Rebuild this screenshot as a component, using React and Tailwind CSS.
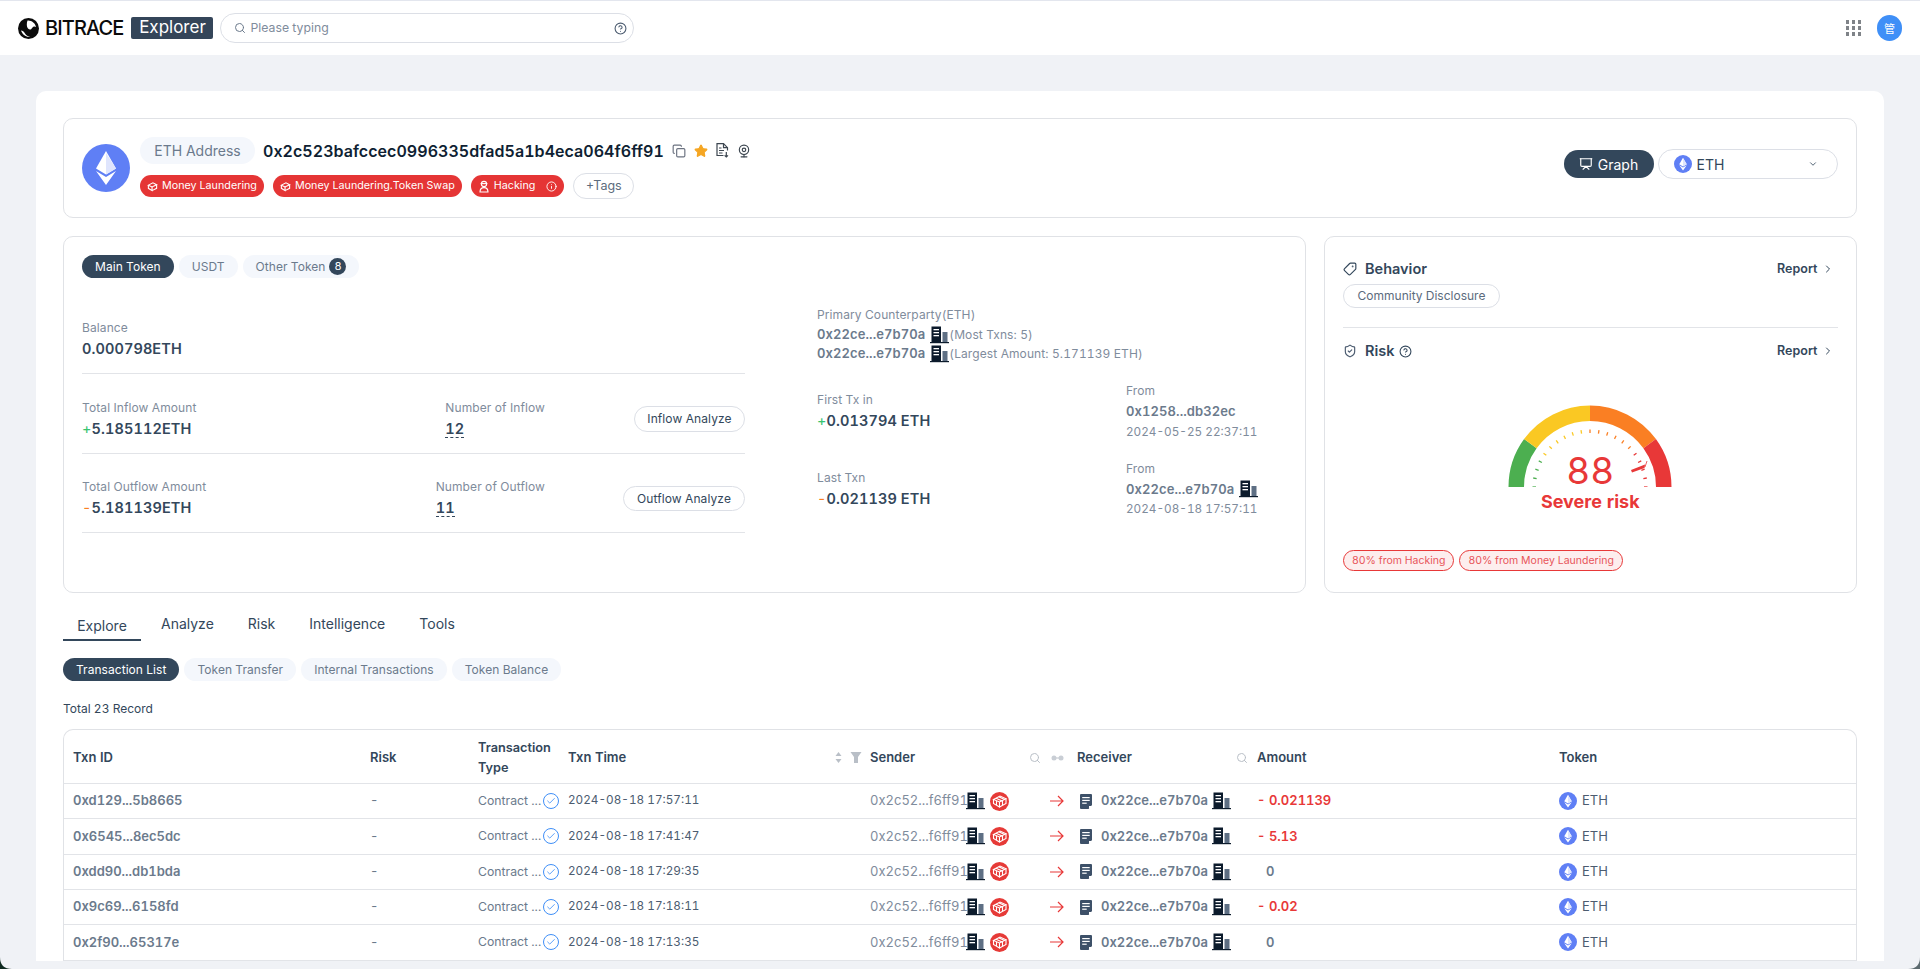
import { Copy, Star, Search, ChevronRight, ChevronDown, Tag, CircleHelp, Info, ShieldCheck, Presentation, Check, Webcam } from 'lucide-react'

const rows = [
  { id: '0xd129...5b8665', time: '2024-08-18 17:57:11', amount: '- 0.021139' },
  { id: '0x6545...8ec5dc', time: '2024-08-18 17:41:47', amount: '- 5.13' },
  { id: '0xdd90...db1bda', time: '2024-08-18 17:29:35', amount: '0' },
  { id: '0x9c69...6158fd', time: '2024-08-18 17:18:11', amount: '- 0.02' },
  { id: '0x2f90...65317e', time: '2024-08-18 17:13:35', amount: '0' },
]

const TABLE_COLS = 'grid grid-cols-[297px_108px_90px_302px_207px_180px_302px_1fr] pl-[9px]'

function EthIcon({ size = 18 }) {
  return (
    <svg width={size} height={size} viewBox="0 0 48 48" className="shrink-0">
      <circle cx="24" cy="24" r="24" fill="#5f7ff5" />
      <path d="M24 7 L34 24.5 L24 30.5 L14 24.5 Z" fill="#fff" />
      <path d="M24 9 L24 30.5 L34 24.5 Z" fill="#dfe5fd" />
      <path d="M14 27 L24 33 L34 27 L24 41 Z" fill="#fff" />
    </svg>
  )
}

function BuildingIcon({ className = '' }) {
  return (
    <svg width="19" height="18" viewBox="0 0 19 18" className={`shrink-0 ${className}`}>
      <rect x="1.5" y="0.5" width="9.5" height="15.5" fill="#0c1b2c" />
      <rect x="3.5" y="3" width="5.5" height="1.3" fill="#fff" />
      <rect x="3.5" y="6" width="5.5" height="1.3" fill="#fff" />
      <rect x="3.5" y="9" width="5.5" height="1.3" fill="#fff" />
      <rect x="12.5" y="6" width="5" height="10" fill="#5e6f84" />
      <rect x="0" y="16" width="19" height="1.2" fill="#0c1b2c" />
    </svg>
  )
}

function CubeBadge() {
  return (
    <svg width="19" height="19" viewBox="0 0 19 19" className="shrink-0">
      <circle cx="9.5" cy="9.5" r="9.5" fill="#e63a37" />
      <g fill="none" stroke="#fff" strokeWidth="1.1">
        <path d="M3.5 7.5 L10 4 L16 6.8 L9.5 10 Z" />
        <path d="M3.5 7.5 V11.5 L9.5 15 V10" />
        <path d="M16 6.8 V11.5 L9.5 15" />
        <path d="M6 6.2 L12.2 9 M8.6 4.8 L14.6 7.6 M12.5 9 V13 M6.5 9 V13" />
      </g>
    </svg>
  )
}

function DocIcon() {
  return (
    <svg width="12" height="15" viewBox="0 0 12 15" className="shrink-0">
      <path d="M1 0 H11 Q12 0 12 1 V11 L8.5 15 H1 Q0 15 0 14 V1 Q0 0 1 0 Z" fill="#3d5068" />
      <rect x="2.2" y="3" width="7.5" height="1.2" fill="#fff" />
      <rect x="2.2" y="5.8" width="7.5" height="1.2" fill="#fff" />
      <rect x="2.2" y="8.6" width="4.5" height="1.2" fill="#fff" />
      <path d="M9 12 H12 L9 15 Z" fill="#fff" />
    </svg>
  )
}

function ReportDownIcon() {
  return (
    <svg width="13" height="15" viewBox="0 0 13 15" className="shrink-0" fill="none" stroke="#3c4650" strokeWidth="1.2">
      <path d="M7.5 12.5 H1 V0.7 H7.5 L11.5 4.7 V7.5" />
      <path d="M7.5 0.7 V4.7 H11.5" />
      <path d="M3 5 H5.5 M3 7.5 H8 M3 10 H6.5" />
      <path d="M10.3 9 V14 M8.6 12.4 L10.3 14 L12 12.4" />
    </svg>
  )
}

function MoneyGlyph() {
  return (
    <svg width="11" height="11" viewBox="0 0 12 12" className="shrink-0">
      <g fill="none" stroke="#fff" strokeWidth="1.2">
        <path d="M1.5 4.5 L6.5 2 L10.5 4 L5.5 6.5 Z" />
        <path d="M1.5 4.5 V8 L5.5 10.5 V6.5 M10.5 4 V8 L5.5 10.5" />
      </g>
    </svg>
  )
}

function HackerGlyph() {
  return (
    <svg width="12" height="13" viewBox="0 0 12 13" className="shrink-0">
      <g fill="none" stroke="#fff" strokeWidth="1.1">
        <circle cx="6" cy="4" r="2.6" />
        <path d="M2 12 Q2 7.6 6 7.6 Q10 7.6 10 12 Z" />
        <path d="M2.6 3.6 H9.4" />
      </g>
    </svg>
  )
}

function Logo() {
  return (
    <svg width="21" height="21" viewBox="0 0 21 21" className="shrink-0">
      <circle cx="10.5" cy="10.5" r="10.5" fill="#0b0b0b" />
      <path d="M9.5 2.5 C13 2 17.5 5 18 9 C16.5 8 15 8.5 14 10 C13 12 11.5 12 10 10.5 C8.5 9 8.5 5 9.5 2.5 Z" fill="#fff" />
      <path d="M3 12.5 C4.5 12.5 6 13.5 7 15.5 C8 17.5 10 18.5 12 18.5 C9 19.8 4.5 17 3 12.5 Z" fill="#fff" />
    </svg>
  )
}

function Pill({ active, children }) {
  return (
    <span className={`flex h-[23px] items-center gap-1 rounded-full px-[13px] text-[12px] tracking-[0.05px] ${active ? 'bg-[#33475b] text-white' : 'bg-[#f4f7fc] text-[#6b7a8c]'}`}>
      {children}
    </span>
  )
}

function RedTag({ icon, children }) {
  return (
    <span className="flex h-[22px] items-center gap-[4px] rounded-full bg-[#e53535] px-[7px] text-[10.75px] text-white">
      {icon}
      {children}
    </span>
  )
}

function AddressBold({ children }) {
  return <span className="text-[13px] font-semibold text-[#6b7a8c]">{children}</span>
}

function polar(r, deg) {
  const a = (deg * Math.PI) / 180
  return [85 - r * Math.cos(a), 82 - r * Math.sin(a)]
}

function arc(from, to) {
  const [x1, y1] = polar(81.5, from)
  const [x2, y2] = polar(81.5, to)
  const [x3, y3] = polar(66, to)
  const [x4, y4] = polar(66, from)
  return `M${x1} ${y1} A81.5 81.5 0 0 1 ${x2} ${y2} L${x3} ${y3} A66 66 0 0 0 ${x4} ${y4} Z`
}

function tickColor(deg) {
  if (deg < 36) return '#4caf50'
  if (deg < 90) return '#fac823'
  if (deg < 144) return '#fa7f23'
  return '#e83838'
}

function Gauge() {
  const ticks = Array.from({ length: 21 }, (_, i) => i * 9)
  return (
    <div className="relative mx-auto h-[82px] w-[170px]">
      <svg width="170" height="82" viewBox="0 0 170 82">
        <path d={arc(0, 36)} fill="#4caf50" />
        <path d={arc(36, 90)} fill="#fac823" />
        <path d={arc(90, 144)} fill="#fa7f23" />
        <path d={arc(144, 180)} fill="#e83838" />
        {ticks.map((deg) => {
          const [x1, y1] = polar(54, deg)
          const [x2, y2] = polar(57.5, deg)
          return <line key={deg} x1={x1} y1={y1} x2={x2} y2={y2} stroke={tickColor(deg)} strokeWidth="1.3" />
        })}
        <path d="M126 65 L140 59.5 L139.6 63 L127 67.5 Z" fill="#e83838" />
        <path d="M140 62 L142 56" stroke="#e83838" strokeWidth="0.8" />
      </svg>
      <span className="absolute inset-x-0 top-[50px] text-center text-[37px] leading-[32px] text-[#e83838]">88</span>
    </div>
  )
}

function WindowCorner({ side, color }) {
  return (
    <svg width="12" height="12" viewBox="0 0 12 12" className={`absolute bottom-0 ${side === 'left' ? 'left-0' : 'right-0 -scale-x-100'}`}>
      <path d="M0 0 Q0 12 12 12 H0 Z" fill={color} />
    </svg>
  )
}

function TxnRow({ row }) {
  const isOut = row.amount !== '0'
  return (
    <div className={`${TABLE_COLS} h-[35.33px] items-center border-b border-[#e2e4e8] text-[13px] text-[#6b7a8c]`}>
      <span className="font-semibold">{row.id}</span>
      <span>-</span>
      <span className="flex items-center text-[12.25px]">
        <span className="w-[65px]">Contract ...</span>
        <span className="flex h-4 w-4 shrink-0 items-center justify-center rounded-full border border-[#3f8ff7] text-[#3f8ff7]">
          <Check size={10} />
        </span>
      </span>
      <span className="whitespace-nowrap text-[11.75px] text-[#4c5c70]">{row.time}</span>
      <span className="flex items-center">
        <span className="w-[96px] text-[#7f8c9c]">0x2c52...f6ff91</span>
        <BuildingIcon />
        <span className="ml-[5px]"><CubeBadge /></span>
      </span>
      <span className="flex items-center">
        <svg width="14" height="12" viewBox="0 0 14 12" className="-ml-[27px] mr-[16px] shrink-0" fill="none" stroke="#e83838" strokeWidth="1.2">
          <path d="M0 6 H13 M8 1 L13 6 L8 11" />
        </svg>
        <DocIcon />
        <span className="ml-[9px] w-[111px] font-semibold">0x22ce...e7b70a</span>
        <BuildingIcon />
      </span>
      <span className={`font-semibold ${isOut ? 'text-[#e83838]' : 'pl-[9px]'}`}>{row.amount}</span>
      <span className="flex items-center gap-[5px] text-[#4c5c70]">
        <EthIcon />
        ETH
      </span>
    </div>
  )
}

export default function App() {
  return (
    <div className="relative h-[969px] overflow-hidden bg-[#f0f2f6] font-['Inter',sans-serif] text-[#33475b] tabular-nums">
      <header className="flex h-[55px] items-center border-t border-[#e3e6ee] bg-white pl-[18px] pr-[18px]">
        <Logo />
        <span className="ml-[6px] text-[20px] font-medium tracking-[-0.9px] text-[#0b0b0b]">BITRACE</span>
        <span className="ml-[8px] flex h-[22px] w-[82px] items-center justify-center rounded-[2px] bg-[#344559] text-[17px] text-white">Explorer</span>
        <div className="ml-[7px] flex h-[30px] w-[414px] items-center rounded-full border border-[#dcdfe6] pl-[13px] pr-[6px]">
          <Search size={12} className="text-[#6b7a8c]" />
          <span className="ml-[4px] text-[12.25px] text-[#7f8c9c]">Please typing</span>
          <CircleHelp size={13} className="ml-auto text-[#4c5c70]" />
        </div>
        <div className="ml-auto grid grid-cols-3 gap-[2.5px]">
          {Array.from({ length: 9 }, (_, i) => (
            <span key={i} className="h-[3.5px] w-[3.5px] bg-[#7f8388]" />
          ))}
        </div>
        <span className="ml-4 flex h-[26px] w-[25px] items-center justify-center rounded-full bg-[#3f8ff7] font-['Noto_Sans_CJK_SC',sans-serif] text-[11px] text-white">管</span>
      </header>

      <main className="mx-[36px] mt-[36px] rounded-t-[10px] bg-white pl-[27px] pr-[27.5px] pt-[27px]">
        <section className="flex h-[100px] items-center rounded-[10px] border border-[#e0e2e6] pl-[18px] pr-[18px]">
          <EthIcon size={48} />
          <div className="ml-[10px] flex flex-col gap-[9px]">
            <div className="flex items-center">
              <span className="flex h-[27px] w-[115px] items-center justify-center rounded-full bg-[#f4f7fc] text-[14px] text-[#6b7a8c]">ETH Address</span>
              <span className="ml-[8px] text-[16px] font-semibold tracking-[0.05px] text-[#0f1f33]">0x2c523bafccec0996335dfad5a1b4eca064f6ff91</span>
              <Copy size={14} className="ml-[8px] text-[#6b7280]" />
              <Star size={14} className="ml-[8px] fill-[#f5a623] text-[#f5a623]" />
              <span className="ml-[8px]"><ReportDownIcon /></span>
              <Webcam size={14} className="ml-[8px] text-[#3c4650]" />
            </div>
            <div className="flex items-center gap-[9px]">
              <RedTag icon={<MoneyGlyph />}>Money Laundering</RedTag>
              <RedTag icon={<MoneyGlyph />}>Money Laundering.Token Swap</RedTag>
              <RedTag icon={<HackerGlyph />}>
                Hacking
                <Info size={11} className="ml-[7px]" />
              </RedTag>
              <span className="flex h-[26px] w-[61px] items-center justify-center rounded-full border border-[#dcdfe6] text-[12.5px] text-[#5c6b7d]">+Tags</span>
            </div>
          </div>
          <div className="-mt-[8px] ml-auto flex items-center gap-[4px]">
            <span className="flex h-[28px] w-[90px] items-center justify-center gap-[5px] rounded-full bg-[#33475b] text-[14px] text-white">
              <Presentation size={14} />
              Graph
            </span>
            <span className="flex h-[30px] w-[180px] items-center rounded-full border border-[#dcdfe6] pl-[15px] pr-[19px] text-[14px] text-[#33475b]">
              <EthIcon />
              <span className="ml-[5px]">ETH</span>
              <ChevronDown size={10} className="ml-auto" />
            </span>
          </div>
        </section>

        <section className="mt-[18px] flex gap-[18px]">
          <div className="h-[357px] w-[1243px] rounded-[10px] border border-[#e0e2e6] pl-[18px] pt-[18px]">
            <div className="flex gap-[5px]">
              <Pill active>Main Token</Pill>
              <Pill>USDT</Pill>
              <Pill>
                Other Token
                <span className="flex h-[17px] w-[17px] items-center justify-center rounded-full bg-[#33475b] text-[11px] text-white">8</span>
              </Pill>
            </div>
            <div className="mt-[16px] flex">
              <div className="w-[663px] text-[12px] tracking-[0.1px] text-[#7f8c9c]">
                <div className="h-[80px] border-b border-[#e2e4e8] pt-[24px]">
                  <p className="leading-5">Balance</p>
                  <p className="text-[14.5px] font-semibold leading-[22px] text-[#33475b]">0.000798ETH</p>
                </div>
                <div className="flex h-[80px] border-b border-[#e2e4e8] pt-[24px]">
                  <div className="flex-1">
                    <p className="leading-5">Total Inflow Amount</p>
                    <p className="text-[14.5px] font-semibold leading-[22px] text-[#33475b]"><span className="font-normal text-[#36c46f]">+</span>5.185112ETH</p>
                  </div>
                  <div className="mr-[89px]">
                    <p className="leading-5">Number of Inflow</p>
                    <p className="text-[14.5px] font-semibold leading-[22px] text-[#33475b]"><span className="border-b border-dashed border-[#33475b]">12</span></p>
                  </div>
                  <span className="mt-[8px] flex h-[26px] w-[111px] items-center justify-center rounded-full border border-[#dcdfe6] text-[12px] text-[#33475b]">Inflow Analyze</span>
                </div>
                <div className="flex h-[79px] border-b border-[#e2e4e8] pt-[23px]">
                  <div className="flex-1">
                    <p className="leading-5">Total Outflow Amount</p>
                    <p className="text-[14.5px] font-semibold leading-[22px] text-[#33475b]"><span className="font-normal text-[#fa7f23]">-</span>5.181139ETH</p>
                  </div>
                  <div className="mr-[78px]">
                    <p className="leading-5">Number of Outflow</p>
                    <p className="text-[14.5px] font-semibold leading-[22px] text-[#33475b]"><span className="border-b border-dashed border-[#33475b]">11</span></p>
                  </div>
                  <span className="mt-[9px] flex h-[25px] w-[122px] items-center justify-center rounded-full border border-[#dcdfe6] text-[12px] text-[#33475b]">Outflow Analyze</span>
                </div>
              </div>
              <div className="ml-[72px] flex-1 pr-[48px] pt-[11px] text-[12px] tracking-[0.1px] text-[#7f8c9c]">
                <p className="leading-5">Primary Counterparty(ETH)</p>
                <p className="flex h-[19px] items-center"><AddressBold>0x22ce...e7b70a</AddressBold><BuildingIcon className="ml-[5px]" />(Most Txns: 5)</p>
                <p className="flex h-[19px] items-center"><AddressBold>0x22ce...e7b70a</AddressBold><BuildingIcon className="ml-[5px]" />(Largest Amount: 5.171139 ETH)</p>
                <div className="mt-[18px] flex h-[60px] items-center justify-between">
                  <div>
                    <p className="leading-5">First Tx in</p>
                    <p className="text-[14.5px] font-semibold leading-[22px] text-[#33475b]"><span className="font-normal text-[#36c46f]">+</span>0.013794 ETH</p>
                  </div>
                  <div className="w-[131px] leading-5">
                    <p>From</p>
                    <AddressBold>0x1258...db32ec</AddressBold>
                    <p className="whitespace-nowrap text-[11.75px] tracking-normal">2024-05-25 22:37:11</p>
                  </div>
                </div>
                <div className="mt-[18px] flex h-[60px] items-center justify-between">
                  <div>
                    <p className="leading-5">Last Txn</p>
                    <p className="text-[14.5px] font-semibold leading-[22px] text-[#33475b]"><span className="font-normal text-[#fa7f23]">-</span>0.021139 ETH</p>
                  </div>
                  <div className="w-[131px] leading-5">
                    <p>From</p>
                    <p className="flex h-5 items-center whitespace-nowrap"><AddressBold>0x22ce...e7b70a</AddressBold><BuildingIcon className="ml-[5px]" /></p>
                    <p className="whitespace-nowrap text-[11.75px] tracking-normal">2024-08-18 17:57:11</p>
                  </div>
                </div>
              </div>
            </div>
          </div>

          <div className="h-[357px] flex-1 rounded-[10px] border border-[#e0e2e6] px-[18px] pt-[22px]">
            <div className="flex h-5 items-center">
              <Tag size={14} className="-scale-x-100 text-[#33475b]" />
              <span className="ml-[8px] text-[14.5px] font-semibold">Behavior</span>
              <span className="ml-auto text-[12.5px] font-semibold">Report</span>
              <ChevronRight size={12} className="ml-[4px] mr-[4px]" />
            </div>
            <span className="mt-[5px] flex h-[24px] w-[157px] items-center justify-center rounded-full border border-[#dcdfe6] text-[12px] text-[#5c6b7d]">Community Disclosure</span>
            <div className="mt-[19px] border-t border-[#e2e4e8] pt-[13px]">
              <div className="flex h-5 items-center">
                <ShieldCheck size={14} className="text-[#4c5c70]" />
                <span className="ml-[8px] text-[14.5px] font-semibold">Risk</span>
                <CircleHelp size={13} className="ml-[5px]" />
                <span className="ml-auto text-[12.5px] font-semibold">Report</span>
                <ChevronRight size={12} className="ml-[4px] mr-[4px]" />
              </div>
            </div>
            <div className="mt-[44px]">
              <Gauge />
              <p className="mt-[3px] text-center text-[18px] font-bold leading-[24px] text-[#e83838]">Severe risk</p>
            </div>
            <div className="mt-[36px] flex gap-[5px] text-[10.5px] text-[#e8555a]">
              <span className="flex h-[21px] items-center rounded-full border border-[#e83838] bg-[#fdeeee] px-2">80% from Hacking</span>
              <span className="flex h-[21px] items-center rounded-full border border-[#e83838] bg-[#fdeeee] px-2">80% from Money Laundering</span>
            </div>
          </div>
        </section>

        <nav className="mt-[19px] flex h-[29px] text-[14px] text-[#33475b]">
          <span className="w-[78px] border-b-2 border-[#33475b] pt-[3px] text-center">Explore</span>
          <span className="ml-[20px] pt-[1px]">Analyze</span>
          <span className="ml-[34px] pt-[1px]">Risk</span>
          <span className="ml-[34px] pt-[1px]">Intelligence</span>
          <span className="ml-[34px] pt-[1px]">Tools</span>
        </nav>

        <div className="mt-[17px] flex gap-[5px]">
          <Pill active>Transaction List</Pill>
          <Pill>Token Transfer</Pill>
          <Pill>Internal Transactions</Pill>
          <Pill>Token Balance</Pill>
        </div>

        <p className="mt-[18px] text-[12px] leading-5 text-[#33475b]">Total 23 Record</p>

        <div className="mt-[10px] rounded-t-[10px] border border-b-0 border-[#e0e2e6]">
          <div className={`${TABLE_COLS} h-[54px] items-center border-b border-[#e2e4e8] pt-[2px] text-[13px] font-semibold`}>
            <span>Txn ID</span>
            <span>Risk</span>
            <span className="text-[12.75px] leading-[20px]">Transaction Type</span>
            <span className="flex items-center pr-[18px]">
              Txn Time
              <svg width="7" height="11" viewBox="0 0 7 11" className="ml-auto" fill="#b9bfc7">
                <path d="M3.5 0 L6.5 4 H0.5 Z M3.5 11 L0.5 7 H6.5 Z" />
              </svg>
              <svg width="12" height="11" viewBox="0 0 12 11" className="ml-[8px] mr-[-10px]" fill="#b9bfc7">
                <path d="M0.5 0 H11.5 L8 5 V11 H4 V5 Z" />
              </svg>
            </span>
            <span className="flex items-center pr-[36px]">
              Sender
              <Search size={12} className="ml-auto text-[#b9bfc7]" />
            </span>
            <span className="relative flex items-center pr-[9px]">
              <svg width="13" height="6" viewBox="0 0 13 6" className="absolute -left-[26px]" fill="#c9ced5">
                <circle cx="3" cy="3" r="2.5" />
                <circle cx="10" cy="3" r="2.5" />
                <rect x="3" y="2.4" width="7" height="1.2" />
              </svg>
              Receiver
              <Search size={12} className="ml-auto text-[#b9bfc7]" />
            </span>
            <span>Amount</span>
            <span>Token</span>
          </div>
          {rows.map((row) => (
            <TxnRow key={row.id} row={row} />
          ))}
        </div>
      </main>

      <WindowCorner side="left" color="#0f2a20" />
      <WindowCorner side="right" color="#5d6b70" />
    </div>
  )
}
